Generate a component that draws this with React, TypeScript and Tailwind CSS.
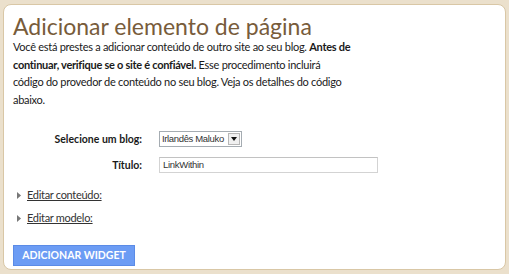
export default function App() {
  return (
    <div className="w-[509px] h-[274px] bg-[#ebe0cc] pt-[4px] px-[3px] pb-[4px]">
      <div
        className="h-full bg-white rounded-[8px] border border-[#d9c7a6] pl-[9px] pt-[9px] flex flex-col"
        style={{ fontFamily: "Lato, 'Open Sans', sans-serif" }}
      >
        <h1 className="text-[23px] leading-[24px] text-[#785c3b] font-normal">
          Adicionar elemento de página
        </h1>
        <p className="text-[11px] tracking-[-0.28px] leading-[17.5px] text-[#1a1a1a]">
          Você está prestes a adicionar conteúdo de outro site ao seu blog. <b>Antes de</b>
          <br />
          <b>continuar, verifique se o site é confiável.</b> Esse procedimento incluirá
          <br />
          código do provedor de conteúdo no seu blog. Veja os detalhes do código
          <br />
          abaixo.
        </p>
        <div className="mt-[23px] grid grid-cols-[129px_1fr] gap-x-[17px] gap-y-[10px] items-center">
          <div className="text-right text-[10.5px] font-bold text-[#1a1a1a] leading-[16px]">Selecione um blog:</div>
          <div className="flex">
            <div className="h-[16px] w-[83px] border border-[#a5acb2] flex items-center bg-white">
              <span
                className="flex-1 pl-[2px] text-[9.5px] tracking-[-0.35px] text-[#333] leading-[14px] whitespace-nowrap overflow-hidden"
                style={{ fontFamily: "'Liberation Sans', Arial, sans-serif" }}
              >
                Irlandês Maluko
              </span>
              <span className="w-[12px] h-[12px] mr-[1px] border border-[#b7b7b7] bg-[#f0f0f0] flex items-center justify-center shrink-0">
                <svg width="6" height="4" viewBox="0 0 6 4">
                  <path d="M0 0h6L3 4z" fill="#111" />
                </svg>
              </span>
            </div>
          </div>
          <div className="text-right text-[10.5px] font-bold text-[#1a1a1a] leading-[16px]">Título:</div>
          <div className="flex">
            <div className="h-[16px] w-[219px] border border-[#d3d3d3] border-t-[#c2c2c2] flex items-center">
              <span
                className="pl-[3px] text-[9.5px] tracking-[-0.3px] text-[#333] leading-[14px] whitespace-nowrap"
                style={{ fontFamily: "'Liberation Sans', Arial, sans-serif" }}
              >
                LinkWithin
              </span>
            </div>
          </div>
        </div>
        <div className="mt-[15px] flex items-center gap-[6px] leading-[14px]">
          <svg width="4" height="7" viewBox="0 0 4 7" className="ml-[4px]">
            <path d="M0 0l4 3.5L0 7z" fill="#777" />
          </svg>
          <span className="text-[11px] tracking-[-0.3px] text-[#333] underline">Editar conteúdo:</span>
        </div>
        <div className="mt-[9px] flex items-center gap-[6px] leading-[14px]">
          <svg width="4" height="7" viewBox="0 0 4 7" className="ml-[4px]">
            <path d="M0 0l4 3.5L0 7z" fill="#777" />
          </svg>
          <span className="text-[11px] tracking-[-0.3px] text-[#333] underline">Editar modelo:</span>
        </div>
        <div className="mt-[16px]">
          <button className="h-[21px] w-[122px] bg-[#6c9cf4] border border-[#5b8be6] text-white text-[10.5px] font-bold">
            ADICIONAR WIDGET
          </button>
        </div>
      </div>
    </div>
  );
}
